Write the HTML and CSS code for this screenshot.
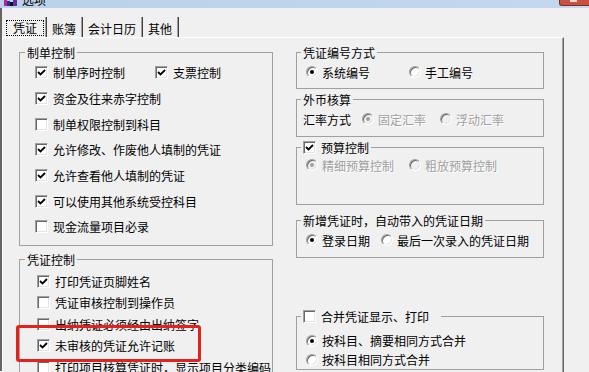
FILE: index.html
```html
<!DOCTYPE html>
<html lang="zh-CN">
    <head>
        <meta charset="UTF-8">
        <meta name="viewport" content="width=device-width, initial-scale=1.0">
        <title>选项</title>
        <link rel="stylesheet" href="styles.css">
    </head>
    <body>
        <div class="window">
            <div class="titlebar">
                <svg class="app_icon" width="14" height="8" viewBox="0 0 14 8">
                    <rect x="0" y="0" width="3" height="7" fill="#c01f8c"/>
                    <rect x="3" y="2" width="3" height="5" fill="#1b2fb8"/>
                    <rect x="6" y="3" width="3" height="4" fill="#111"/>
                    <rect x="9" y="1" width="4" height="6" fill="#6a2aa8"/>
                </svg>
                <span class="title_text">选项</span>
                <span class="close_btn"></span>
            </div>

            <div class="dialog">
                <div class="tabs">
                    <div class="tab active"><span class="focus">凭证</span></div>
                    <div class="tab">账簿</div>
                    <div class="tab">会计日历</div>
                    <div class="tab">其他</div>
                </div>

                <div class="panel">
                    <!-- left column -->
                    <div class="column column_left">
                        <fieldset class="group group_make">
                            <legend>制单控制</legend>
                            <div class="row">
                                <label class="opt opt_make"><span class="check on"><svg class="tick" viewBox="0 0 11 11"><path d="M2 5l2.5 2.5L9 3"/></svg></span>制单序时控制</label>
                                <label class="opt"><span class="check on"><svg class="tick" viewBox="0 0 11 11"><path d="M2 5l2.5 2.5L9 3"/></svg></span>支票控制</label>
                            </div>
                            <div class="row">
                                <label class="opt"><span class="check on"><svg class="tick" viewBox="0 0 11 11"><path d="M2 5l2.5 2.5L9 3"/></svg></span>资金及往来赤字控制</label>
                            </div>
                            <div class="row">
                                <label class="opt"><span class="check"></span>制单权限控制到科目</label>
                            </div>
                            <div class="row">
                                <label class="opt"><span class="check on"><svg class="tick" viewBox="0 0 11 11"><path d="M2 5l2.5 2.5L9 3"/></svg></span>允许修改、作废他人填制的凭证</label>
                            </div>
                            <div class="row">
                                <label class="opt"><span class="check on"><svg class="tick" viewBox="0 0 11 11"><path d="M2 5l2.5 2.5L9 3"/></svg></span>允许查看他人填制的凭证</label>
                            </div>
                            <div class="row">
                                <label class="opt"><span class="check on"><svg class="tick" viewBox="0 0 11 11"><path d="M2 5l2.5 2.5L9 3"/></svg></span>可以使用其他系统受控科目</label>
                            </div>
                            <div class="row">
                                <label class="opt"><span class="check"></span>现金流量项目必录</label>
                            </div>
                        </fieldset>

                        <fieldset class="group group_voucher">
                            <legend>凭证控制</legend>
                            <div class="row">
                                <label class="opt"><span class="check on"><svg class="tick" viewBox="0 0 11 11"><path d="M2 5l2.5 2.5L9 3"/></svg></span>打印凭证页脚姓名</label>
                            </div>
                            <div class="row">
                                <label class="opt"><span class="check"></span>凭证审核控制到操作员</label>
                            </div>
                            <div class="row">
                                <label class="opt"><span class="check"></span>出纳凭证必须经由出纳签字</label>
                            </div>
                            <div class="row">
                                <label class="opt"><span class="check on"><svg class="tick" viewBox="0 0 11 11"><path d="M2 5l2.5 2.5L9 3"/></svg></span>未审核的凭证允许记账</label>
                            </div>
                            <div class="row">
                                <label class="opt"><span class="check"></span>打印项目核算凭证时，显示项目分类编码</label>
                            </div>
                        </fieldset>
                    </div>

                    <!-- right column -->
                    <div class="column column_right">
                        <fieldset class="group group_number">
                            <legend>凭证编号方式</legend>
                            <div class="row">
                                <label class="opt opt_number"><span class="radio on"></span>系统编号</label>
                                <label class="opt"><span class="radio"></span>手工编号</label>
                            </div>
                        </fieldset>

                        <fieldset class="group group_currency">
                            <legend>外币核算</legend>
                            <div class="row">
                                <span class="row_label">汇率方式</span>
                                <label class="opt opt_rate disabled"><span class="radio on"></span>固定汇率</label>
                                <label class="opt disabled"><span class="radio"></span>浮动汇率</label>
                            </div>
                        </fieldset>

                        <fieldset class="group group_budget">
                            <legend class="legend_check"><span class="check on"><svg class="tick" viewBox="0 0 11 11"><path d="M2 5l2.5 2.5L9 3"/></svg></span>预算控制</legend>
                            <div class="row">
                                <label class="opt opt_number disabled"><span class="radio on"></span>精细预算控制</label>
                                <label class="opt disabled"><span class="radio"></span>粗放预算控制</label>
                            </div>
                        </fieldset>

                        <fieldset class="group group_date">
                            <legend>新增凭证时，自动带入的凭证日期</legend>
                            <div class="row">
                                <label class="opt opt_date"><span class="radio on"></span>登录日期</label>
                                <label class="opt"><span class="radio"></span>最后一次录入的凭证日期</label>
                            </div>
                        </fieldset>

                        <fieldset class="group group_merge">
                            <legend class="legend_check legend_merge"><span class="check"></span>合并凭证显示、打印</legend>
                            <div class="row">
                                <label class="opt"><span class="radio on"></span>按科目、摘要相同方式合并</label>
                            </div>
                            <div class="row">
                                <label class="opt"><span class="radio"></span>按科目相同方式合并</label>
                            </div>
                        </fieldset>
                    </div>
                </div>
            </div>

            <div class="highlight"></div>
        </div>
    </body>
</html>
```

FILE: styles.css
```css
body {
    margin: 0;
    background: #f0f0f0;
    font-family: "Noto Sans CJK SC", "Microsoft YaHei", sans-serif;
    font-size: 12px;
    color: #000;
}

.window {
    position: relative;
    width: 589px;
    height: 372px;
    overflow: hidden;
}

/* title bar, mostly cropped */
.titlebar {
    display: flex;
    align-items: flex-start;
    height: 8px;
    overflow: hidden;
    background: linear-gradient(to right, #b9d1ea, #c4d8ee);
}

.app_icon {
    margin-left: 4px;
    margin-top: -1px;
}

.title_text {
    margin-left: 4px;
    margin-top: -6px;
    line-height: 12px;
    font-size: 12px;
}

.close_btn {
    position: relative;
    margin-left: auto;
    width: 29px;
    height: 5px;
    background: #c8513f;
    border-left: 1px solid #7d2c22;
    border-bottom: 1px solid #7d2c22;
    border-bottom-left-radius: 3px;
}
.close_btn::after {
    content: '';
    position: absolute;
    left: 10px;
    top: 0;
    width: 7px;
    height: 2px;
    background: #e9d9d6;
}

/* dialog body */
.dialog {
    border-left: 2px solid #646464;
    padding-top: 9px;
    height: 363px;
    box-sizing: border-box;
}

.tabs {
    display: flex;
    margin-left: 3px;
    height: 20px;
}

.tab {
    box-sizing: border-box;
    height: 20px;
    padding: 4px 6px 0 5px;
    line-height: 16px;
    border-right: 1px solid #404040;
    box-shadow: inset -1px 0 #a0a0a0;
}

.tab.active {
    padding: 3px 2px 0 1px;
}

.tab .focus {
    display: block;
    padding: 0 6px;
    line-height: 14px;
    border: 1px dotted #000;
}

.panel {
    display: flex;
    gap: 23px;
    box-sizing: border-box;
    width: 562px;
    height: 100%;
    padding: 7px 0 0 16px;
    border-top: 1px solid #fff;
    border-left: 1px solid #fff;
    border-right: 1px solid #696969;
    box-shadow: inset -1px 0 #a0a0a0;
}

.column {
    display: flex;
    flex-direction: column;
    flex: none;
}
.column_left {
    width: 254px;
}
.column_right {
    width: 248px;
}

/* group boxes */
.group {
    margin: 0;
    min-width: 0;
    border: 1px solid #a0a0a0;
    padding: 0;
}

.group legend {
    display: flex;
    align-items: center;
    padding: 0 2px;
    line-height: 15px;
    margin-left: 5px;
}

.column_right .group legend {
    margin-left: 4px;
}

.legend_check .check {
    margin-right: 5px;
}

.group legend.legend_merge {
    padding-right: 12px;
}

.row {
    display: flex;
    align-items: center;
    height: 20px;
    padding-left: 9px;
    white-space: nowrap;
}

.opt {
    display: flex;
    align-items: center;
    flex: none;
}

.row_label {
    width: 59px;
    flex: none;
}

.group_make {
    padding-bottom: 5px;
}
.group_make .row {
    height: 25.67px;
    padding-left: 15px;
}
.opt_make {
    width: 120px;
}

.group_voucher {
    margin-top: 6px;
    padding-top: 4px;
}
.group_voucher .row {
    height: 21.5px;
    padding-left: 17px;
}

.group_number {
    padding: 2px 0 6px 0;
}
.opt_number {
    width: 103px;
}

.group_currency {
    margin-top: 3px;
    padding: 2px 0 7px 0;
}
.group_currency .row {
    padding-left: 6px;
}
.opt_rate {
    width: 78px;
}

.group_budget {
    margin-top: 3px;
    padding: 0 0 29px 0;
}

.group_date {
    margin-top: 8px;
    padding: 2px 0 7px 0;
}
.opt_date {
    width: 75px;
}

.group_merge {
    margin-top: 51px;
    padding-top: 7px;
}
.group_merge .row {
    height: 19px;
}

/* classic check box */
.check {
    display: inline-flex;
    align-items: center;
    justify-content: center;
    box-sizing: border-box;
    width: 13px;
    height: 13px;
    margin-right: 5px;
    background: #fff;
    border: 1px solid;
    border-color: #a0a0a0 #fff #fff #a0a0a0;
    box-shadow: inset 1px 1px #696969, inset -1px -1px #e3e3e3;
    flex: none;
}

.tick {
    width: 11px;
    height: 11px;
    fill: none;
    stroke: #000;
    stroke-width: 1.8;
}

/* classic radio */
.radio {
    display: inline-flex;
    align-items: center;
    justify-content: center;
    box-sizing: border-box;
    width: 12px;
    height: 12px;
    margin-right: 4px;
    border-radius: 50%;
    background: #fff;
    border: 1px solid;
    border-color: #a0a0a0 #fff #fff #a0a0a0;
    box-shadow: inset 1px 1px #696969, inset -1px -1px #e3e3e3;
    flex: none;
}
.radio.on::after {
    content: '';
    width: 4px;
    height: 4px;
    border-radius: 50%;
    background: #000;
}

.disabled {
    color: #a0a0a0;
    text-shadow: 1px 1px 0 #fff;
}
.disabled .radio {
    background: #f0f0f0;
}
.disabled .radio.on::after {
    background: #a0a0a0;
}

/* red annotation frame */
.highlight {
    position: absolute;
    left: 16px;
    top: 325px;
    width: 185px;
    height: 37px;
    box-sizing: border-box;
    border: 3px solid #e5211d;
    border-radius: 3px;
}
```
